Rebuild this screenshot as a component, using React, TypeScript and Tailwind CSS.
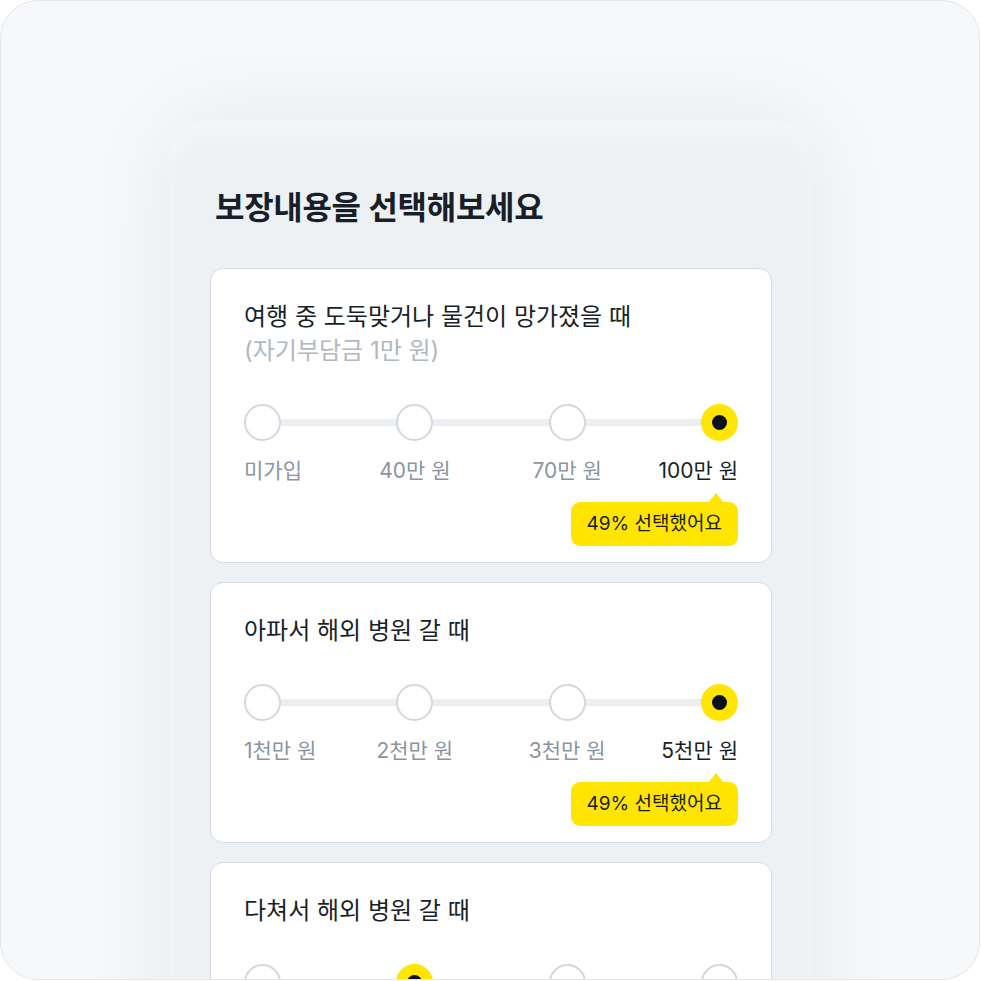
type Coverage = {
  title: string;
  note?: string;
  options: string[];
  selected: number;
  percent: string;
};

const items: Coverage[] = [
  {
    title: "여행 중 도둑맞거나 물건이 망가졌을 때",
    note: "(자기부담금 1만 원)",
    options: ["미가입", "40만 원", "70만 원", "100만 원"],
    selected: 3,
    percent: "49%",
  },
  {
    title: "아파서 해외 병원 갈 때",
    options: ["1천만 원", "2천만 원", "3천만 원", "5천만 원"],
    selected: 3,
    percent: "49%",
  },
  {
    title: "다쳐서 해외 병원 갈 때",
    options: ["1천만 원", "2천만 원", "3천만 원", "5천만 원"],
    selected: 1,
    percent: "51%",
  },
];

function Dot({ active }: { active: boolean }) {
  if (active) {
    return (
      <div className="relative z-10 flex h-[37px] w-[37px] items-center justify-center rounded-full bg-[#ffe500]">
        <div className="h-[15px] w-[15px] rounded-full bg-[#0b0f17]" />
      </div>
    );
  }
  return (
    <div className="relative z-10 h-[37px] w-[37px] rounded-full border-2 border-[#d3d8de] bg-white" />
  );
}

function CoverageCard({ item }: { item: Coverage }) {
  const last = item.options.length - 1;
  return (
    <div className="rounded-[13px] border border-[#d5dbe1] bg-white px-[33px] pt-[31px] pb-[16px]">
      <p className="text-[24px] leading-[34px] text-[#191f28]">{item.title}</p>
      {item.note && (
        <p className="text-[24px] leading-[34px] text-[#b0b8c1]">{item.note}</p>
      )}

      {/* slider */}
      <div className="relative mt-[36px] flex justify-between">
        <div className="absolute left-[18px] right-[18px] top-[15px] h-[7px] bg-[#eceff2]" />
        {item.options.map((opt, i) => (
          <div
            key={opt}
            className={`flex w-[37px] flex-col ${
              i === 0 ? "items-start" : i === last ? "items-end" : "items-center"
            }`}
          >
            <Dot active={i === item.selected} />
            <span
              className={`mt-[16px] whitespace-nowrap text-[21px] leading-[28px] ${
                i === item.selected ? "text-[#191f28]" : "text-[#8b95a1]"
              }`}
            >
              {opt}
            </span>
          </div>
        ))}
      </div>

      {/* tooltip */}
      <div className="mt-[17px] flex justify-end">
        <div className="relative rounded-[9px] bg-[#ffe500] px-[16px] py-[8px] text-[19px] leading-[28px] text-[#191f28]">
          <div className="absolute -top-[9px] right-[14px] h-0 w-0 border-x-[8px] border-b-[10px] border-x-transparent border-b-[#ffe500]" />
          {item.percent} 선택했어요
        </div>
      </div>
    </div>
  );
}

export default function App() {
  return (
    <div
      className="h-[981px] w-[981px] bg-white"
      style={{ fontFamily: '"Inter", "Noto Sans CJK KR", sans-serif' }}
    >
      <div className="h-[980px] w-[980px] overflow-hidden rounded-[38px] border border-[#e3e6ea] bg-[#f7f8fa] pt-[119px]">
        <div className="ml-[168px] w-[644px] rounded-t-[40px] bg-[#eef1f4] px-[41px] pt-[68px] shadow-[0_0_90px_rgba(0,0,0,0.07),inset_0_14px_24px_rgba(255,255,255,0.35)]">
          <h1 className="pl-[5px] text-[32px] font-semibold leading-[40px] tracking-[-0.3px] text-[#191f28]">
            보장내용을 선택해보세요
          </h1>
          <div className="mt-[40px] flex flex-col gap-[19px]">
            {items.map((item) => (
              <CoverageCard key={item.title} item={item} />
            ))}
          </div>
        </div>
      </div>
    </div>
  );
}
